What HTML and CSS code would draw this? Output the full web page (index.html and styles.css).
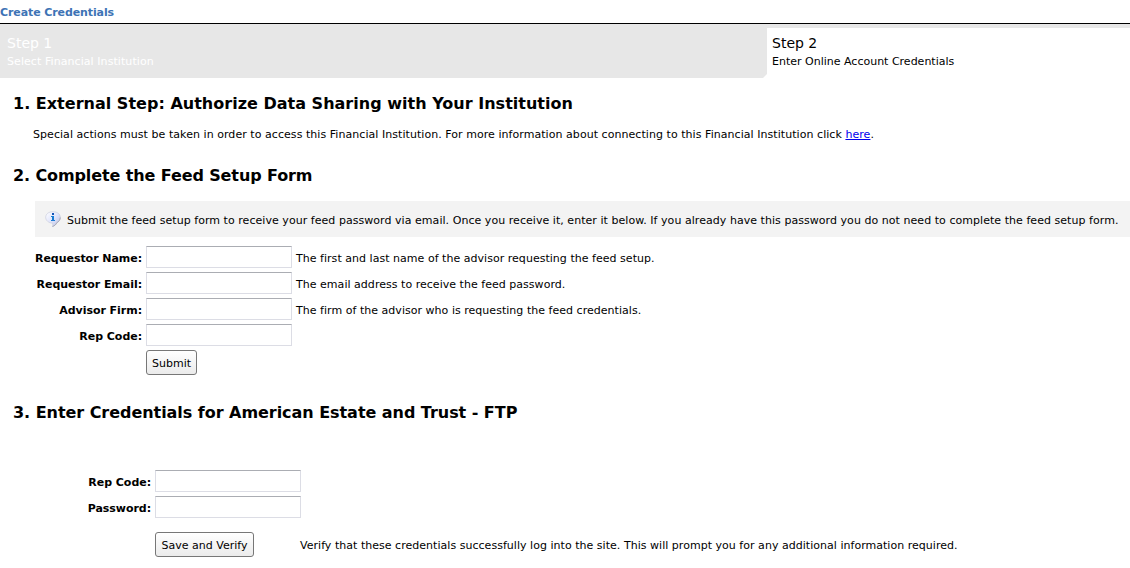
FILE: index.html
```
<!DOCTYPE html>
<html lang="en">
  <head>
    <meta charset="UTF-8" />
    <title>Create Credentials</title>
    <link rel="stylesheet" href="styles.css">
  </head>
  <body>
    <div class="page-title">Create Credentials</div>
    <div class="steps">
      <div class="step step-done">
        <div class="step-name">Step 1</div>
        <div class="step-text">Select Financial Institution</div>
      </div>
      <div class="step step-current">
        <div class="step-name">Step 2</div>
        <div class="step-text">Enter Online Account Credentials</div>
      </div>
    </div>

    <h2>1. External Step: Authorize Data Sharing with Your Institution</h2>
    <p class="intro">Special actions must be taken in order to access this Financial Institution. For more information about connecting to this Financial Institution click <a href="#">here</a>.</p>

    <h2 class="feed-heading">2. Complete the Feed Setup Form</h2>
    <div class="info">
      <svg class="info-icon" width="16" height="16" viewBox="0 0 16 16">
        <defs>
          <linearGradient id="bubble" x1="0" y1="0" x2="1" y2="1">
            <stop offset="0" stop-color="#ffffff" />
            <stop offset="0.5" stop-color="#e0e4fb" />
            <stop offset="1" stop-color="#b9bfe0" />
          </linearGradient>
        </defs>
        <path d="M8 .7C3.700.7.7 3 .7 6.300c0 3.300 3 5.700 7 5.900.2 1.300.2 2.300-.2 3.300 2-.7 3.700-2 4.200-3.700 2.200-1 3.600-3 3.600-5.500C15.300 3 12.300.7 8 .7z" fill="url(#bubble)" stroke="#c5c8da" stroke-width=".6" />
        <path d="M15.300 6.500c-.2 2.500-1.500 4.300-3.600 5.300-.5 1.700-2.200 3-4.200 3.700" fill="none" stroke="#a4a6b2" stroke-width=".9" />
        <rect x="7" y="2" width="2" height="2" fill="#1553b5" />
        <path d="M6 5h3v4h1v1H6V9h1V6H6z" fill="#187bd2" />
      </svg>
      <span class="info-text">Submit the feed setup form to receive your feed password via email. Once you receive it, enter it below. If you already have this password you do not need to complete the feed setup form.</span>
    </div>

    <form class="feed-form">
      <label for="name">Requestor Name:</label>
      <input type="text" id="name" />
      <span class="hint">The first and last name of the advisor requesting the feed setup.</span>
      <label for="email">Requestor Email:</label>
      <input type="text" id="email" />
      <span class="hint">The email address to receive the feed password.</span>
      <label for="firm">Advisor Firm:</label>
      <input type="text" id="firm" />
      <span class="hint">The firm of the advisor who is requesting the feed credentials.</span>
      <label for="rep">Rep Code:</label>
      <input type="text" id="rep" />
      <button type="button" class="submit">Submit</button>
    </form>

    <h2 class="login-heading">3. Enter Credentials for American Estate and Trust - FTP</h2>
    <form class="login-form">
      <label for="login-rep">Rep Code:</label>
      <input type="text" id="login-rep" />
      <label for="password">Password:</label>
      <input type="password" id="password" />
    </form>
    <div class="verify">
      <button type="button" class="save">Save and Verify</button>
      <span class="verify-text">Verify that these credentials successfully log into the site. This will prompt you for any additional information required.</span>
    </div>
  </body>
</html>
```
FILE: styles.css
```
body {
  margin: 0;
  background: #fff;
  color: #000;
  font-family: Verdana, "DejaVu Sans", sans-serif;
  font-size: 11px;
  line-height: 14px;
  white-space: nowrap;
  overflow: hidden;
}
.page-title {
  height: 17px;
  padding-top: 6px;
  border-bottom: 1px solid #000;
  color: #3d73b5;
  font-weight: bold;
  letter-spacing: -0.1px;
}
.steps {
  display: flex;
  height: 54px;
  background: linear-gradient(#e7e7e7 4px, #fff 4px);
}
.step {
  box-sizing: border-box;
  padding-top: 10px;
}
.step-done {
  width: 767px;
  padding-left: 7px;
  background: #e7e7e7;
  color: #fff;
  clip-path: polygon(0 0, 100% 0, 100% 50px, 763px 100%, 0 100%);
}
.step-done .step-text {
  letter-spacing: 0.07px;
}
.step-current {
  padding-left: 5px;
}
.step-name {
  font-size: 14px;
  line-height: 18px;
}
.step-text {
  padding-top: 3px;
}
h2 {
  margin: 16px 0 0 13px;
  font-size: 16px;
  line-height: 20px;
  letter-spacing: 0.015px;
}
.intro {
  margin: 14px 0 0 33px;
  letter-spacing: 0.052px;
}
.feed-heading {
  margin-top: 24px;
  letter-spacing: -0.11px;
}
.info {
  display: flex;
  align-items: center;
  height: 36px;
  margin: 15px 0 0 35px;
  padding-left: 10px;
  background: #f3f3f3;
}
.info-icon {
  margin-right: 6px;
}
.info-text {
  padding-top: 4px;
  letter-spacing: 0.046px;
}
.feed-form,
.login-form {
  display: grid;
  grid-template-columns: 107px 146px 1fr;
  grid-auto-rows: 22px;
  gap: 4px;
  margin: 9px 0 0 35px;
}
label {
  padding-top: 6px;
  font-weight: bold;
  text-align: right;
  letter-spacing: -0.04px;
}
.hint {
  padding-top: 6px;
  letter-spacing: 0.03px;
}
input {
  box-sizing: border-box;
  width: 146px;
  height: 22px;
  border: 1px solid #dcdde5;
  border-top-color: #abadb3;
  background: #fff;
}
button {
  box-sizing: border-box;
  height: 25px;
  padding: 2px 0 0;
  border: 1px solid #777;
  border-radius: 3px;
  background: linear-gradient(#fff, #ebebeb);
  color: #000;
  font: inherit;
}
.submit {
  grid-row: 5;
  grid-column: 2;
  width: 51px;
}
.login-heading {
  margin-top: 31px;
  letter-spacing: -0.045px;
}
.login-form {
  grid-template-columns: 107px 146px;
  margin: 47px 0 0 44px;
}
.verify {
  display: flex;
  align-items: center;
  margin: 14px 0 0 155px;
}
.save {
  width: 99px;
  margin-right: 46px;
}
.verify-text {
  padding-top: 2px;
  letter-spacing: 0.03px;
}
```
